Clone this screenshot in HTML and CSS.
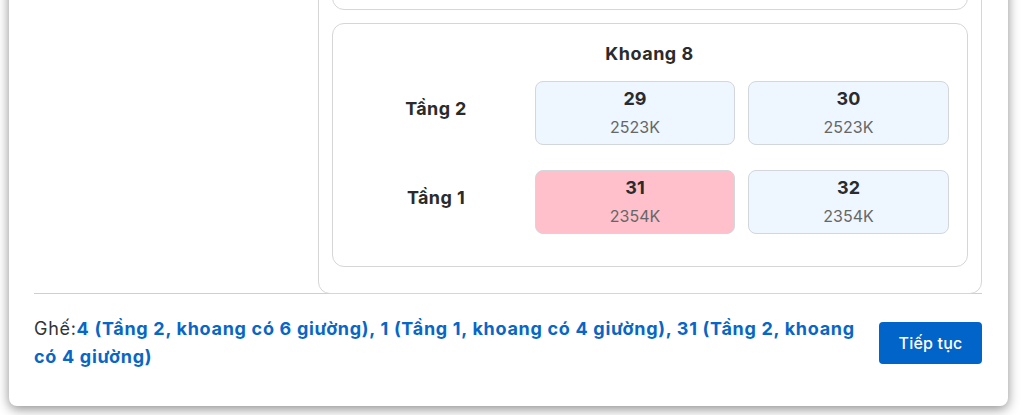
FILE: index.html
```html
<!DOCTYPE html>
<html lang="vi">
<head>
<meta charset="utf-8">
<title>Chọn chỗ</title>
<link rel="stylesheet" href="styles.css">
</head>
<body>
<div class="viewport">
  <div class="modal">
    <div class="seatmap">
      <div class="seatmap-side"></div>
      <div class="deck">
        <div class="compartment">
          <div class="compartment-title">Khoang 7</div>
          <div class="rows">
            <div class="floor-label">Tầng 2</div>
            <div class="seat"><span class="seat-no">25</span><span class="seat-price">2523K</span></div>
            <div class="seat"><span class="seat-no">26</span><span class="seat-price">2523K</span></div>
            <div class="floor-label">Tầng 1</div>
            <div class="seat"><span class="seat-no">27</span><span class="seat-price">2354K</span></div>
            <div class="seat"><span class="seat-no">28</span><span class="seat-price">2354K</span></div>
          </div>
        </div>
        <div class="compartment">
          <div class="compartment-title">Khoang 8</div>
          <div class="rows">
            <div class="floor-label">Tầng 2</div>
            <div class="seat"><span class="seat-no">29</span><span class="seat-price">2523K</span></div>
            <div class="seat"><span class="seat-no">30</span><span class="seat-price">2523K</span></div>
            <div class="floor-label">Tầng 1</div>
            <div class="seat seat-selected"><span class="seat-no">31</span><span class="seat-price">2354K</span></div>
            <div class="seat"><span class="seat-no">32</span><span class="seat-price">2354K</span></div>
          </div>
        </div>
      </div>
    </div>
    <div class="footer">
      <p class="summary"><span class="summary-label">Ghế:</span><strong class="summary-value">4 (Tầng 2, khoang có 6 giường), 1 (Tầng 1, khoang có 4 giường), 31 (Tầng 2, khoang có 4 giường)</strong></p>
      <button class="btn-continue" type="button">Tiếp tục</button>
    </div>
  </div>
</div>
</body>
</html>
```

FILE: styles.css
```css
* { box-sizing: border-box; }

html, body {
  margin: 0;
  padding: 0;
  background: #ffffff;
  overflow: hidden;
}

body {
  font-family: Inter, "Noto Sans", "Liberation Sans", sans-serif;
  color: #222;
}

.viewport {
  height: 415px;
  display: flex;
  flex-direction: column;
  justify-content: flex-end;
  overflow: hidden;
}

.modal {
  flex: none;
  margin: 0 17px 9px 9px;
  background: #fff;
  border-radius: 8px;
  box-shadow: 0 3px 12px rgba(0, 0, 0, 0.45);
  padding: 0 26px 0 25px;
}

.seatmap {
  display: grid;
  grid-template-columns: 284px 1fr;
}

.deck {
  border: 1px solid #d6d6d6;
  border-radius: 12px;
  padding: 13px 13px 26px;
  margin-bottom: -1px;
  display: flex;
  flex-direction: column;
  gap: 13px;
}

.compartment {
  border: 1px solid #d6d6d6;
  border-radius: 12px;
  padding: 18px 18px 32px 17px;
}

.compartment-title {
  text-align: center;
  font-size: 18px;
  font-weight: 700;
  line-height: 24px;
  letter-spacing: 0.5px;
  color: #2b2b2b;
  margin-bottom: 15px;
}

.rows {
  display: grid;
  grid-template-columns: 1fr 200px 201px;
  column-gap: 13px;
  row-gap: 25px;
}

.floor-label {
  align-self: center;
  text-align: center;
  font-size: 18px;
  font-weight: 700;
  line-height: 24px;
  letter-spacing: 0.4px;
  color: #2b2b2b;
  margin-bottom: 8px;
}

.seat {
  height: 64px;
  border: 1px solid #d3d6da;
  border-radius: 8px;
  background: #eef6ff;
  display: flex;
  flex-direction: column;
  align-items: center;
  justify-content: center;
  gap: 6px;
}

.seat-selected {
  background: #ffc0cb;
}

.seat-no {
  font-size: 18px;
  font-weight: 700;
  line-height: 22px;
  color: #2b2b2b;
}

.seat-price {
  font-size: 16px;
  font-weight: 400;
  line-height: 22px;
  color: #666;
}

.footer {
  border-top: 1px solid #cfcfcf;
  display: flex;
  align-items: center;
  gap: 16px;
  padding: 21px 0 35px 0;
}

.summary {
  flex: 1;
  margin: 0;
  font-size: 18px;
  line-height: 28px;
  letter-spacing: 0.7px;
}

.summary-label {
  color: #333;
  font-weight: 400;
}

.summary-value {
  color: #0866c6;
  font-weight: 700;
}

.btn-continue {
  flex: none;
  width: 103px;
  height: 42px;
  border: none;
  border-radius: 4px;
  background: #0064c8;
  color: #fff;
  font-family: inherit;
  font-size: 16px;
  font-weight: 500;
  letter-spacing: 0.2px;
  cursor: pointer;
}
```
